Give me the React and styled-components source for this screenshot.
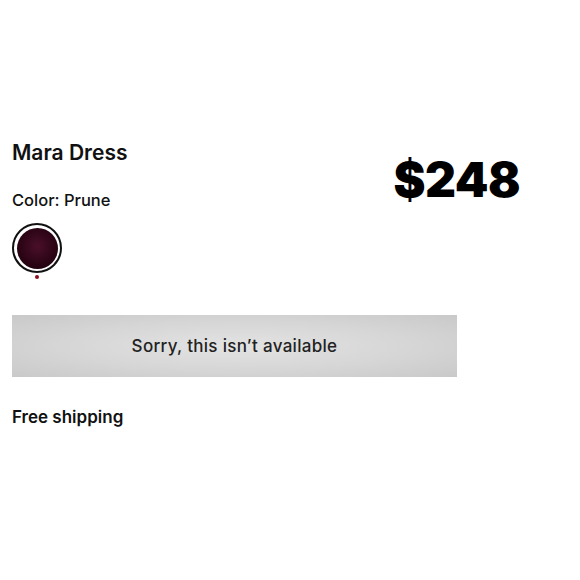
import React from "react";
import styled, { createGlobalStyle } from "styled-components";

const GlobalStyle = createGlobalStyle`
	body {
		margin: 0;
		background: #fff;
		font-family: Inter, "Liberation Sans", sans-serif;
		color: #111;
	}
`;

const Page = styled.div`
	width: 580px;
	height: 580px;
	padding: 140px 12px 0;
	box-sizing: border-box;
`;

const Header = styled.div`
	display: flex;
	justify-content: space-between;
	align-items: flex-start;
	width: 508px;
`;

const Info = styled.div`
	display: flex;
	flex-direction: column;
`;

const Title = styled.h1`
	margin: 0;
	font-size: 21px;
	font-weight: 600;
	line-height: 26px;
`;

const ColorLabel = styled.div`
	margin-top: 24px;
	font-size: 16.5px;
	font-weight: 550;
	line-height: 20px;
`;

const Swatch = styled.button`
	position: relative;
	margin-top: 13px;
	width: 50px;
	height: 50px;
	padding: 0;
	border: 2px solid #111;
	border-radius: 50%;
	background: #fff;
	display: grid;
	place-items: center;

	&::before {
		content: "";
		width: 41px;
		height: 41px;
		border-radius: 50%;
		background: radial-gradient(circle at 50% 45%, #4a0f2a 0%, #2a0414 60%, #1a0009 100%);
	}

	&::after {
		content: "";
		position: absolute;
		left: 50%;
		bottom: -8px;
		width: 4px;
		height: 4px;
		margin-left: -2px;
		border-radius: 50%;
		background: #8a0d1c;
	}
`;

const Price = styled.div`
	margin-top: 13px;
	font-size: 48px;
	font-weight: 900;
	line-height: 54px;
	letter-spacing: -0.5px;
	color: #000;
`;

const SoldOut = styled.button`
	display: block;
	margin-top: 42px;
	width: 445px;
	height: 62px;
	border: 0;
	background: radial-gradient(ellipse at 50% 50%, #e3e3e3 0%, #d6d6d6 55%, #c9c9c9 100%);
	font-family: inherit;
	font-size: 17px;
	font-weight: 500;
	color: #222;
	letter-spacing: 0.3px;
`;

const Shipping = styled.p`
	margin: 29px 0 0;
	font-size: 17px;
	font-weight: 600;
	line-height: 22px;
`;

export default function App() {
	return (
		<>
			<GlobalStyle />
			<Page>
				<Header>
					<Info>
						<Title>Mara Dress</Title>
						<ColorLabel>Color: Prune</ColorLabel>
						<Swatch aria-label="Prune" />
					</Info>
					<Price>$248</Price>
				</Header>
				<SoldOut disabled>Sorry, this isn’t available</SoldOut>
				<Shipping>Free shipping</Shipping>
			</Page>
		</>
	);
}
